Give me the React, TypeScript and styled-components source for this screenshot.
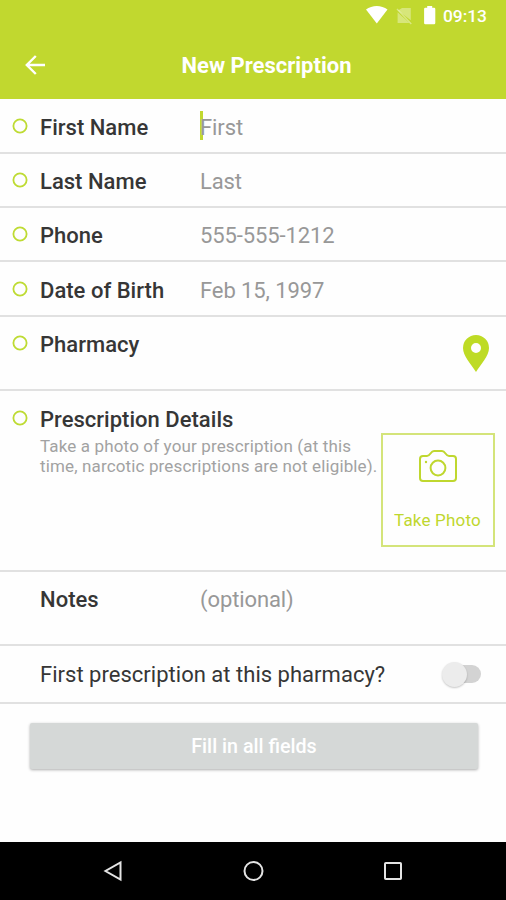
import React from 'react';
import styled, { createGlobalStyle } from 'styled-components';

const lime = '#c1d82f';

const GlobalStyle = createGlobalStyle`
  * { box-sizing: border-box; }
  html, body { margin: 0; padding: 0; background: #fff; }
  body { font-family: Roboto, "Liberation Sans", sans-serif; overflow: hidden; }
`;

const Screen = styled.div`
  display: flex;
  flex-direction: column;
  width: 506px;
  height: 900px;
  background: #fefefe;
`;

const Header = styled.header`
  height: 99px;
  flex: none;
  display: flex;
  flex-direction: column;
  background: ${lime};
  color: #fff;
`;

const StatusBar = styled.div`
  height: 32px;
  display: flex;
  align-items: center;
  justify-content: flex-end;
  padding-right: 19px;
`;

const Clock = styled.span`
  font-size: 17.4px;
  font-weight: 500;
  line-height: 32px;
`;

const TitleBar = styled.div`
  height: 67px;
  display: grid;
  grid-template-columns: 70px 1fr 44px;
  align-items: center;
`;

const BackButton = styled.button`
  display: flex;
  padding: 0 0 2px 24px;
  border: 0;
  background: none;
`;

const Title = styled.h1`
  margin: 0;
  padding: 1px 0 0 1px;
  text-align: center;
  font-size: 22px;
  line-height: 30px;
  font-weight: 700;
`;

const Form = styled.main`
  flex: 1;
  display: flex;
  flex-direction: column;
`;

const Row = styled.div<{ $height: number; $top: number }>`
  height: ${(p) => p.$height}px;
  flex: none;
  display: flex;
  align-items: flex-start;
  padding: ${(p) => p.$top}px 12px 0 40px;
  border-bottom: 2px solid #e1e1e1;
`;

const Bullet = styled.svg`
  flex: none;
  width: 16px;
  height: 16px;
  margin: 4px 12px 0 -28px;
  fill: none;
  stroke: #bedb33;
  stroke-width: 1.8;
`;

const Label = styled.span<{ $wide?: boolean; $regular?: boolean }>`
  flex: none;
  width: ${(p) => (p.$wide ? 'auto' : '160px')};
  font-size: 22px;
  line-height: 28px;
  font-weight: ${(p) => (p.$regular ? 400 : 500)};
  letter-spacing: 0.02px;
  color: #363636;
  white-space: nowrap;
`;

const Value = styled.span`
  font-size: 22px;
  line-height: 28px;
  letter-spacing: -0.1px;
  color: #989898;
  white-space: nowrap;
`;

const Caret = styled.span`
  width: 3px;
  height: 29px;
  margin: -3px -3px 0 0;
  background: ${lime};
`;

const PinButton = styled.button`
  display: flex;
  margin: 4px 5px 0 auto;
  padding: 0;
  border: 0;
  background: none;
`;

const Details = styled.div`
  width: 340.5px;
  flex: none;
`;

const Hint = styled.p`
  margin: 2px 0 0;
  font-size: 17px;
  line-height: 20px;
  letter-spacing: 0.14px;
  color: #a2a2a2;
  white-space: nowrap;
`;

const PhotoButton = styled.button`
  flex: none;
  width: 114px;
  height: 114px;
  margin-top: 27px;
  padding: 15px 0 0;
  display: flex;
  flex-direction: column;
  align-items: center;
  gap: 26px;
  border: 2px solid #d4e47a;
  background: transparent;
  color: #bfd72f;
  font: 400 17px/24px Roboto, "Liberation Sans", sans-serif;
  letter-spacing: 0.2px;
`;

const Toggle = styled.span`
  width: 38px;
  height: 18px;
  margin: 4px 13px 0 auto;
  display: flex;
  align-items: center;
  border-radius: 9px;
  background: #d3d3d3;
`;

const Knob = styled.span`
  flex: none;
  width: 25px;
  height: 25px;
  margin-left: -1px;
  border-radius: 50%;
  background: #ececec;
  box-shadow: 0 1px 2px rgba(0, 0, 0, 0.22);
`;

const Submit = styled.button`
  width: 448px;
  height: 46px;
  margin: 19px 0 0 30px;
  padding: 1px 0 0;
  border: 0;
  border-radius: 2px;
  background: #d5d8d7;
  box-shadow: 0 1px 3px rgba(0, 0, 0, 0.32);
  color: #fff;
  font: 500 19.7px/45px Roboto, "Liberation Sans", sans-serif;
`;

const NavBar = styled.nav`
  height: 58px;
  flex: none;
  display: grid;
  grid-template-columns: repeat(3, 140px);
  justify-content: center;
  align-items: center;
  justify-items: center;
  background: #000;
`;

const fields = [
  { label: 'First Name', value: 'First', height: 54.5, top: 14.5 },
  { label: 'Last Name', value: 'Last', height: 54.5, top: 14.5 },
  { label: 'Phone', value: '555-555-1212', height: 54, top: 14 },
  { label: 'Date of Birth', value: 'Feb 15, 1997', height: 55, top: 15 },
];

const Ring = () => (
  <Bullet viewBox="0 0 16 16">
    <circle cx="8" cy="8" r="6.6" />
  </Bullet>
);

export default function App() {
  return (
    <>
      <GlobalStyle />
      <Screen>
        <Header>
          <StatusBar>
            <svg width="80" height="22" viewBox="363 5 80 22" fill="#fff">
              <path d="M366 14.2C372 9.5 381.5 9.5 387.5 14.2L376.8 28.2Z" transform="translate(0 -4.6)" />
              <path d="M402 8h8.8v12.3L398 10.6Z M397.6 12.2L409.4 23H397.6Z" opacity=".36" />
              <path d="M397 9L411.3 24" stroke="#fff" strokeWidth="1.4" opacity=".4" />
              <path d="M427.2 6h5v1.8h1.9a1.2 1.2 0 0 1 1.2 1.2v14a1.2 1.2 0 0 1-1.2 1.2h-8.8a1.2 1.2 0 0 1-1.2-1.2V9a1.2 1.2 0 0 1 1.2-1.2h1.9Z" />
            </svg>
            <Clock>09:13</Clock>
          </StatusBar>
          <TitleBar>
            <BackButton aria-label="Back">
              <svg width="22" height="20" viewBox="0 0 22 20" fill="none" stroke="#fff" strokeWidth="2.4">
                <path d="M21 10H3M11.8 1L2.8 10L11.8 19" />
              </svg>
            </BackButton>
            <Title>New Prescription</Title>
          </TitleBar>
        </Header>

        <Form>
          {fields.map((f, i) => (
            <Row key={f.label} $height={f.height} $top={f.top}>
              <Ring />
              <Label>{f.label}</Label>
              {i === 0 && <Caret />}
              <Value>{f.value}</Value>
            </Row>
          ))}
          <Row $height={74} $top={14}>
            <Ring />
            <Label>Pharmacy</Label>
            <PinButton aria-label="Choose pharmacy">
              <svg width="26" height="37" viewBox="0 0 26 37">
                <path
                  d="M13 0A13 13 0 0 0 0 13C0 21 8 29 13 37C18 29 26 21 26 13A13 13 0 0 0 13 0ZM13 8A5 5 0 1 1 13 18A5 5 0 1 1 13 8Z"
                  fill="#bedb25"
                  fillRule="evenodd"
                />
              </svg>
            </PinButton>
          </Row>
          <Row $height={181} $top={14.5}>
            <Ring />
            <Details>
              <Label $wide>Prescription Details</Label>
              <Hint>
                Take a photo of your prescription (at this
                <br />
                time, narcotic prescriptions are not eligible).
              </Hint>
            </Details>
            <PhotoButton>
              <svg width="38" height="32" viewBox="0 0 38 32" fill="none" stroke="#bfd72f" strokeWidth="2">
                <path d="M4 6H8C11.5 6 11.5 1 15 1H23C26.5 1 26.5 6 30 6H34a3 3 0 0 1 3 3V28a3 3 0 0 1-3 3H4a3 3 0 0 1-3-3V9a3 3 0 0 1 3-3Z" />
                <circle cx="19" cy="18" r="7.4" />
                <circle cx="7" cy="12" r="1.2" fill="#bfd72f" stroke="none" />
              </svg>
              Take Photo
            </PhotoButton>
          </Row>
          <Row $height={74} $top={14}>
            <Label>Notes</Label>
            <Value>(optional)</Value>
          </Row>
          <Row $height={58} $top={15}>
            <Label $wide $regular>First prescription at this pharmacy?</Label>
            <Toggle>
              <Knob />
            </Toggle>
          </Row>
          <Submit>Fill in all fields</Submit>
        </Form>

        <NavBar>
          <svg width="22" height="22" viewBox="0 0 22 22" fill="none" stroke="#e4e4e4" strokeWidth="2">
            <path d="M18.5 2.5V19.5L3.5 11Z" />
          </svg>
          <svg width="22" height="22" viewBox="0 0 22 22" fill="none" stroke="#e4e4e4" strokeWidth="2">
            <circle cx="11.5" cy="11" r="9" />
          </svg>
          <svg width="22" height="22" viewBox="0 0 22 22" fill="none" stroke="#e4e4e4" strokeWidth="2">
            <rect x="3" y="3" width="16" height="16" rx="0.8" />
          </svg>
        </NavBar>
      </Screen>
    </>
  );
}
